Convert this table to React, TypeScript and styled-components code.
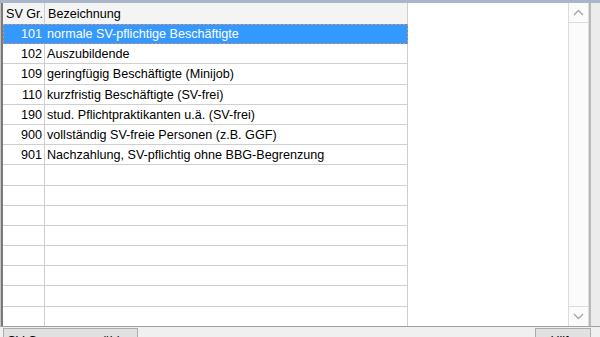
import styled, { createGlobalStyle } from 'styled-components';

const rows = [
  { code: '101', name: 'normale SV-pflichtige Beschäftigte' },
  { code: '102', name: 'Auszubildende' },
  { code: '109', name: 'geringfügig Beschäftigte (Minijob)' },
  { code: '110', name: 'kurzfristig Beschäftigte (SV-frei)' },
  { code: '190', name: 'stud. Pflichtpraktikanten u.ä. (SV-frei)' },
  { code: '900', name: 'vollständig SV-freie Personen (z.B. GGF)' },
  { code: '901', name: 'Nachzahlung, SV-pflichtig ohne BBG-Begrenzung' },
];

const TOTAL_ROWS = 15;

export default function App() {
  const filled = [...rows];
  while (filled.length < TOTAL_ROWS) filled.push({ code: '', name: '' });

  return (
    <>
      <Global />
      <Window>
        <TopBand />
        <GridArea>
          <Cells>
            <Table>
              <HeadRow>
                <HeadCell>SV Gr.</HeadCell>
                <HeadCell>Bezeichnung</HeadCell>
              </HeadRow>
              {filled.map((r, i) => (
                <Row key={i} $selected={i === 0}>
                  <Cell $selected={i === 0}>{r.code}</Cell>
                  <Cell $selected={i === 0} $left>{r.name}</Cell>
                </Row>
              ))}
            </Table>
          </Cells>
          <ScrollBar>
            <Arrow>
              <svg width="11" height="7" viewBox="0 0 11 7">
                <path d="M1 6 L5.5 1.5 L10 6" fill="none" stroke="#a6a6a6" strokeWidth="1.3" />
              </svg>
            </Arrow>
            <Track />
            <Arrow $bottom>
              <svg width="11" height="7" viewBox="0 0 11 7">
                <path d="M1 1 L5.5 5.5 L10 1" fill="none" stroke="#a6a6a6" strokeWidth="1.3" />
              </svg>
            </Arrow>
          </ScrollBar>
          <RightFrame />
        </GridArea>
        <ButtonRow>
          <Button $width={135}>SV-Gruppe auswählen</Button>
          <Spacer />
          <Button $width={56}>Hilfe</Button>
        </ButtonRow>
      </Window>
    </>
  );
}

const Global = createGlobalStyle`
  html, body {
    margin: 0;
    padding: 0;
    background: #f0f0f0;
    overflow: hidden;
  }
`;

const Window = styled.div`
  width: 600px;
  height: 337px;
  overflow: hidden;
  display: flex;
  flex-direction: column;
  background: #f0f0f0;
  font-family: 'Liberation Sans', Arial, sans-serif;
  font-size: 12.6px;
  color: #000;
`;

const TopBand = styled.div`
  height: 3px;
  flex-shrink: 0;
  background: #a9b5c8;
`;

const GridArea = styled.div`
  height: 324px;
  flex-shrink: 0;
  display: flex;
  border-left: 1px solid #c4c4c4;
  border-bottom: 1px solid #a0a0a0;
  box-sizing: border-box;
`;

const Cells = styled.div`
  flex: 1;
  background: #fff;
  border-left: 2px solid #7a7a7a;
  overflow: hidden;
`;

const Table = styled.div`
  display: flex;
  flex-direction: column;
  width: 405px;
`;

const HeadRow = styled.div`
  display: grid;
  grid-template-columns: 42px 363px;
  height: 21px;
  flex-shrink: 0;
  background: #f4f4f4;
`;

const HeadCell = styled.div`
  border-right: 1px solid #cfcfcf;
  border-bottom: 1px solid #cfcfcf;
  padding: 1px 2px 0 3px;
  line-height: 20px;
  white-space: nowrap;
`;

const Row = styled.div<{ $selected?: boolean }>`
  display: grid;
  grid-template-columns: 42px 363px;
  height: 20.2px;
  flex-shrink: 0;
  position: relative;
  background: ${(p) => (p.$selected ? '#3399ff' : '#fff')};
  color: ${(p) => (p.$selected ? '#fff' : '#000')};
  ${(p) =>
    p.$selected &&
    `
    &::after {
      content: '';
      position: absolute;
      inset: 0 0 0 0;
      background:
        repeating-linear-gradient(90deg, #f0876c 0 2px, transparent 2px 4px) top / 100% 1px no-repeat,
        repeating-linear-gradient(90deg, #f0876c 0 2px, transparent 2px 4px) bottom / 100% 1px no-repeat,
        repeating-linear-gradient(180deg, #f0876c 0 2px, transparent 2px 4px) left / 1px 100% no-repeat,
        repeating-linear-gradient(180deg, #f0876c 0 2px, transparent 2px 4px) right / 1px 100% no-repeat;
    }
  `}
`;

const Cell = styled.div<{ $left?: boolean; $selected?: boolean }>`
  border-right: 1px solid ${(p) => (p.$selected ? '#3399ff' : '#cfcfcf')};
  border-bottom: 1px solid ${(p) => (p.$selected ? '#3399ff' : '#cfcfcf')};
  padding: ${(p) => (p.$left ? '0 2px 0 2px' : '0 2px 0 0')};
  line-height: 20px;
  white-space: nowrap;
  overflow: hidden;
  text-align: ${(p) => (p.$left ? 'left' : 'right')};
`;

const ScrollBar = styled.div`
  width: 19px;
  flex-shrink: 0;
  display: flex;
  flex-direction: column;
  background: #fbfbfb;
  border-left: 1px solid #dcdcdc;
  border-right: 1px solid #dcdcdc;
`;

const Arrow = styled.div<{ $bottom?: boolean }>`
  height: 19px;
  flex-shrink: 0;
  display: flex;
  align-items: center;
  justify-content: center;
  border-${(p) => (p.$bottom ? 'top' : 'bottom')}: 1px solid #dcdcdc;
`;

const Track = styled.div`
  flex: 1;
`;

const RightFrame = styled.div`
  width: 9px;
  flex-shrink: 0;
  border-left: 2px solid #b9b9b9;
  background: #ececec;
`;

const ButtonRow = styled.div`
  display: flex;
  padding: 1px 9px 0 3px;
`;

const Spacer = styled.div`
  flex: 1;
`;

const Button = styled.div<{ $width: number }>`
  width: ${(p) => p.$width}px;
  height: 24px;
  box-sizing: border-box;
  border: 1px solid #adadad;
  background: #e1e1e1;
  text-align: center;
  padding-top: 5px;
  line-height: 14px;
  white-space: nowrap;
  overflow: hidden;
`;
